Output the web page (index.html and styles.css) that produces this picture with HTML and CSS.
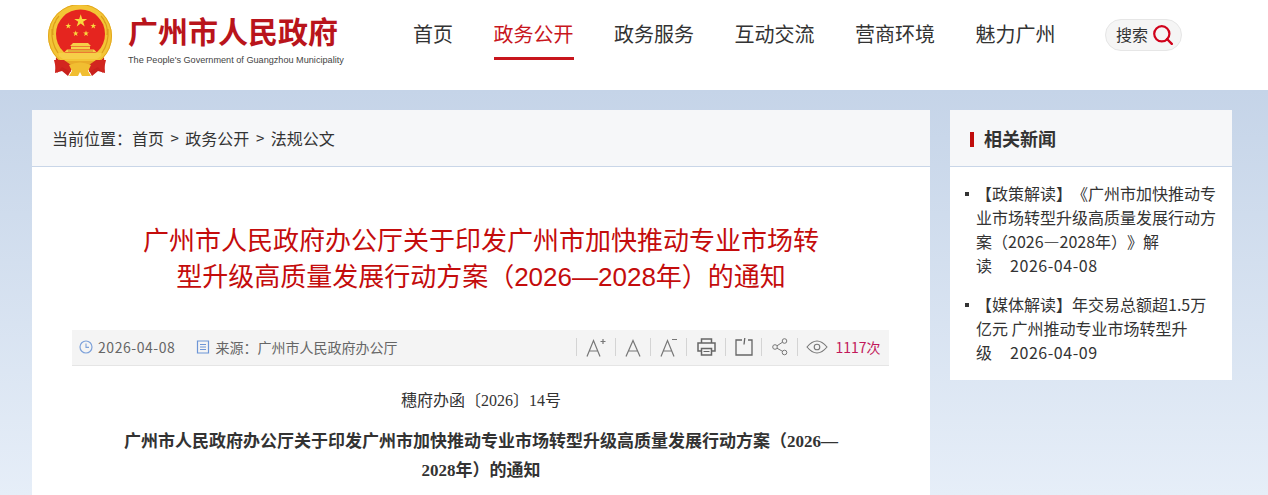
FILE: index.html
```html
<!DOCTYPE html>
<html lang="zh-CN">
<head>
<meta charset="utf-8">
<title>广州市人民政府办公厅关于印发广州市加快推动专业市场转型升级高质量发展行动方案的通知</title>
<link rel="stylesheet" href="styles.css">
</head>
<body>
<div class="page">
  <header class="header">
    <a class="brand">
      <svg class="emblem" viewBox="0 0 66 72" aria-hidden="true">
        <defs>
          <path id="star" d="M0-1 .225-.309H.951L.363.118.588.809 0 .382-.588.809-.363.118-.951-.309H-.225Z"/>
        </defs>
        <path d="M9 52 L8 68 L15 66 L21 71 L27 60 Z M57 52 L58 68 L51 66 L45 71 L39 60 Z" fill="#c9211c"/>
        <circle cx="33" cy="31" r="32" fill="#f3c536"/>
        <circle cx="33" cy="31" r="31.500" fill="none" stroke="#e3a71f" stroke-width="1"/>
        <path d="M5 24Q4 38 11 48M61 24Q62 38 55 48M8 17Q5 23 6 30M58 17Q61 23 60 30M12 11Q9 14 8 18M54 11Q57 14 58 18" fill="none" stroke="#dc9d1c" stroke-width="1.200"/>
        <circle cx="33.500" cy="29" r="24.500" fill="#e5251f"/>
        <g fill="#f9d93e">
          <use href="#star" transform="translate(33.700 16) scale(6.800)"/>
          <use href="#star" transform="translate(21.300 21) scale(3.100)"/>
          <use href="#star" transform="translate(46.300 21) scale(3.100)"/>
          <use href="#star" transform="translate(28.700 28.500) scale(3.100)"/>
          <use href="#star" transform="translate(39 28.500) scale(3.100)"/>
        </g>
        <path d="M26 38H41L44 41H23ZM24 41.500H43V44H24ZM20 44.500H47L50 47.500H17ZM12 48H54V51L50 54H16L12 51Z" fill="#f6cf48"/>
        <path d="M21 46H46" stroke="#c9811c" stroke-width=".8"/>
        <path d="M14 56H52L50 60H16Z" fill="#e9ab27"/>
        <path d="M7 55H17L24 60V67L15 62 10 68ZM59 55H49L42 60V67L51 62 56 68Z" fill="#d2261f"/>
        <path d="M22 60Q33 55 44 60L41 66 44 71H35L33 67 31 71H22L25 66Z" fill="#f1be31"/>
      </svg>
      <span class="brand-text">
        <strong class="brand-name">广州市人民政府</strong>
        <span class="brand-en">The People's Government of Guangzhou Municipality</span>
      </span>
    </a>
    <nav class="nav">
      <a class="nav-item">首页</a>
      <a class="nav-item is-active">政务公开</a>
      <a class="nav-item">政务服务</a>
      <a class="nav-item">互动交流</a>
      <a class="nav-item">营商环境</a>
      <a class="nav-item">魅力广州</a>
    </nav>
    <div class="search">
      <span class="search-label">搜索</span>
      <svg class="search-icon" viewBox="0 0 20 20" aria-hidden="true">
        <circle cx="8.800" cy="8.800" r="7.600" fill="none" stroke="#d0021b" stroke-width="2.200"/>
        <path d="M14 14 L18.800 18.800" stroke="#d0021b" stroke-width="2.400" stroke-linecap="round"/>
      </svg>
    </div>
  </header>

  <main class="main">
    <article class="article">
      <div class="crumbs">
        <span>当前位置：</span><a>首页</a><span class="sep">&gt;</span><a>政务公开</a><span class="sep">&gt;</span><a>法规公文</a>
      </div>
      <h1 class="title">广州市人民政府办公厅关于印发广州市加快推动专业市场转型升级高质量发展行动方案（2026—2028年）的通知</h1>
      <div class="meta">
        <div class="meta-info">
          <span class="meta-item">
            <svg class="meta-icon" viewBox="0 0 14 14" aria-hidden="true"><circle cx="7" cy="7" r="6" fill="none" stroke="#7ea2da" stroke-width="1.200"/><path d="M7 3.500V7.400H10" fill="none" stroke="#7ea2da" stroke-width="1.100"/></svg>
            <span class="meta-date">2026-04-08</span>
          </span>
          <span class="meta-item">
            <svg class="meta-icon" viewBox="0 0 14 14" aria-hidden="true"><path d="M1.500 1H12.500V13H1.500Z M4 4.500H10 M4 7H10 M4 9.500H10" fill="none" stroke="#6d95d6" stroke-width="1.200"/></svg>
            <span>来源：广州市人民政府办公厅</span>
          </span>
        </div>
        <div class="tools">
          <span class="tool tool-w39"><svg viewBox="0 0 20 20" width="20" height="20" aria-hidden="true"><path d="M1 19.500L7.500 3.500 14 19.500M3.300 14H11.700M14.500 4.500H19.500M17 2V7" fill="none" stroke="#777" stroke-width="1.200"/></svg></span>
          <span class="tool tool-w35"><svg viewBox="0 0 16 20" width="16" height="20" aria-hidden="true"><path d="M1 19.500L8 3.500 15 19.500M3.300 14H12.700" fill="none" stroke="#777" stroke-width="1.200"/></svg></span>
          <span class="tool tool-w36"><svg viewBox="0 0 17 20" width="17" height="20" aria-hidden="true"><path d="M1 19.500L7.500 3.500 14 19.500M3.200 14H11.800M12 2.500H17" fill="none" stroke="#777" stroke-width="1.200"/></svg></span>
          <span class="tool tool-w39"><svg viewBox="0 0 19 18" width="19" height="18" aria-hidden="true"><path d="M4.500 5V1H14.500V5M4.500 13H1V5H18V13H14.500M4.500 10.500H14.500V17H4.500Z" fill="none" stroke="#666" stroke-width="1.500"/><path d="M6.500 13.500H12.500" stroke="#666"/></svg></span>
          <span class="tool tool-w36"><svg viewBox="0 0 18 18" width="18" height="18" aria-hidden="true"><path d="M7 2H1V17H17V2H13M9.800 0L9 6.500" fill="none" stroke="#666" stroke-width="1.300"/></svg></span>
          <span class="tool tool-w36"><svg viewBox="0 0 16 18" width="16" height="18" aria-hidden="true"><circle cx="12.500" cy="3" r="2.300" fill="none" stroke="#777"/><circle cx="12.500" cy="14.500" r="2.300" fill="none" stroke="#777"/><circle cx="3" cy="9" r="2.300" fill="none" stroke="#777"/><path d="M5 7.800L10.500 4.200M5 10.200L10.500 13.300" stroke="#777"/></svg></span>
          <span class="tool tool-views"><svg viewBox="0 0 22 14" width="22" height="14" aria-hidden="true"><path d="M1 7Q11-5 21 7 11 19 1 7Z" fill="none" stroke="#777" stroke-width="1.100"/><circle cx="11" cy="7" r="2.800" fill="none" stroke="#777" stroke-width="1.100"/></svg><span class="views">1117次</span></span>
        </div>
      </div>
      <div class="body">
        <p class="doc-no">穗府办函〔2026〕14号</p>
        <p class="doc-title">广州市人民政府办公厅关于印发广州市加快推动专业市场转型升级高质量发展行动方案（2026—2028年）的通知</p>
      </div>
    </article>

    <aside class="side">
      <h2 class="side-head">相关新闻</h2>
      <ul class="side-list">
        <li>【政策解读】《广州市加快推动专业市场转型升级高质量发展行动方案（2026—2028年）》解<span class="keep">读<span class="date">2026-04-08</span></span></li>
        <li>【媒体解读】年交易总额超1.5万亿元 广州推动专业市场转型升<span class="keep">级<span class="date">2026-04-09</span></span></li>
      </ul>
    </aside>
  </main>
</div>
</body>
</html>
```
FILE: styles.css
```css
* { box-sizing: border-box; }
html, body { margin: 0; padding: 0; }
body {
  font-family: "Noto Sans CJK SC", "Noto Sans", sans-serif;
  color: #333;
  font-size: 16px;
  text-spacing-trim: space-all;
}
p, h1, h2, ul { margin: 0; padding: 0; }
.page {
  height: 495px;
  overflow: hidden;
  background: linear-gradient(180deg, #c5d4e8 90px, #e6eef8 495px);
}

.header {
  height: 90px;
  background: #fff;
  display: flex;
  align-items: flex-start;
  padding-left: 47px;
}
.brand { display: flex; width: 366px; padding-top: 5px; }
.emblem { width: 66px; height: 72px; flex: none; }
.brand-text { display: flex; flex-direction: column; margin-left: 15px; padding-top: 5px; }
.brand-name {
  font-size: 30px;
  line-height: 40px;
  font-weight: 700;
  color: #b9141b;
}
.brand-en {
  font-family: "Liberation Sans", sans-serif;
  font-size: 9.15px;
  line-height: 12px;
  margin-top: 4px;
  color: #444;
  white-space: nowrap;
}
.nav { display: flex; gap: 40.5px; }
.nav-item {
  font-size: 20px;
  line-height: 30px;
  padding: 19px 0 8px;
  color: #333;
  border-bottom: 3px solid transparent;
  height: 60px;
}
.nav-item.is-active { color: #c8161d; border-bottom-color: #c8161d; }
.search {
  margin: 19px 0 0 49.500px;
  width: 77px;
  height: 32px;
  border: 1px solid #e6e6e6;
  border-radius: 16px;
  background: #f5f5f5;
  display: flex;
  align-items: center;
  gap: 5px;
  padding-left: 10px;
  font-size: 16px;
}
.search-label { position: relative; top: -1px; }
.search-icon { width: 20px; height: 20px; flex: none; }

.main {
  display: flex;
  align-items: flex-start;
  gap: 20px;
  padding: 20px 36px 0 32px;
}
.article { width: 898px; height: 600px; background: #fff; }
.crumbs {
  height: 57px;
  background: #f6f7f9;
  border-bottom: 1px solid #c9d6e8;
  padding-left: 20px;
  display: flex;
  align-items: center;
  line-height: 24px;
}
.sep { margin: 0 6.500px; font-size: 15px; }
.title {
  width: 680px;
  margin: 56px auto 0;
  font-size: 26px;
  line-height: 36px;
  font-weight: 400;
  color: #c40c0c;
  text-align: center;
  font-family: "Liberation Sans", "Noto Sans CJK SC", sans-serif;
}
.meta {
  margin: 35px 41px 0 40px;
  height: 36px;
  background: #f4f4f4;
  border-bottom: 1px solid #e5e5e5;
  display: flex;
  justify-content: space-between;
  align-items: center;
  padding: 0 0 2px 7px;
  font-size: 14px;
  color: #666;
}
.meta-info { display: flex; gap: 21px; }
.meta-item { display: flex; align-items: center; gap: 5px; }
.meta-date { letter-spacing: .55px; }
.meta-icon { width: 14px; height: 14px; flex: none; }
.tools { display: flex; align-items: center; }
.tool {
  display: flex;
  align-items: center;
  justify-content: center;
  height: 18px;
  border-left: 1px solid #d4d4d4;
}
.tool-w35 { width: 35px; }
.tool-w36 { width: 36px; }
.tool-w39 { width: 39px; }
.tool-views { width: 92px; gap: 7px; }
.views { color: #c2185b; font-size: 14px; }
.body { font-family: "Liberation Serif", "Noto Sans CJK SC", serif; }
.doc-no { text-align: center; margin-top: 22px; font-size: 16px; line-height: 26px; }
.doc-title {
  width: 724px;
  margin: 13px auto 0;
  text-align: center;
  font-size: 17px;
  line-height: 29px;
  font-weight: 700;
}

.side { width: 282px; background: #fff; height: 270px; }
.side-head {
  height: 57px;
  background: #f6f7f9;
  border-bottom: 1px solid #c9d6e8;
  font-size: 18px;
  font-weight: 700;
  line-height: 56px;
  padding-left: 34px;
  position: relative;
}
.side-head::before {
  content: "";
  position: absolute;
  left: 20px;
  top: 22px;
  width: 4px;
  height: 15px;
  background: #c00d0d;
}
.side-list { list-style: none; padding: 14px 16px 0 26px; }
.side-list li { line-height: 24px; margin-bottom: 15px; position: relative; }
.side-list li::before {
  content: "";
  position: absolute;
  left: -11px;
  top: 11px;
  width: 4px;
  height: 4px;
  background: #333;
}
.keep { white-space: nowrap; }
.date { margin-left: 18px; letter-spacing: .55px; }
```
